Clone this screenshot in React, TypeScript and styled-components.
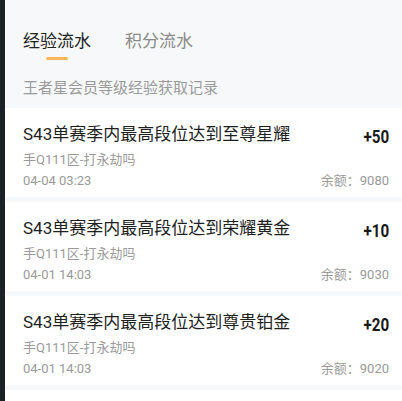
import React from 'react';
import styled, { createGlobalStyle } from 'styled-components';

const GlobalStyle = createGlobalStyle`
    html, body {
        margin: 0;
        padding: 0;
        background: #f7f8fa;
    }
    body {
        font-family: Roboto, "Noto Sans CJK SC", sans-serif;
    }
`;

const Page = styled('div')`
    display: flex;
    width: 402px;
    height: 401px;
    overflow: hidden;
`;

const SideStrip = styled('div')`
    width: 5px;
    flex-shrink: 0;
    background: #1d2127;
`;

const Main = styled('div')`
    flex: 1;
    background: #f7f8fa;
`;

const TabBar = styled('div')`
    display: flex;
    gap: 34px;
    padding: 29px 18px 0;
`;

const Tab = styled('div')`
    display: flex;
    flex-direction: column;
    align-items: center;
`;

const TabLabel = styled('span')<{ $active?: boolean }>`
    font-size: 17px;
    line-height: 24px;
    color: ${(p) => (p.$active ? '#222222' : '#8a8a8a')};
`;

const TabLine = styled('i')<{ $active?: boolean }>`
    display: block;
    width: 22px;
    height: 3px;
    margin-top: 4px;
    border-radius: 2px;
    background: ${(p) => (p.$active ? '#f9b65b' : 'transparent')};
`;

const Caption = styled('p')`
    margin: 18px 0 9px;
    padding: 0 18px;
    font-size: 15px;
    line-height: 21px;
    color: #9a9a9a;
`;

const List = styled('div')`
    display: flex;
    flex-direction: column;
    gap: 5px;
`;

const Card = styled('div')`
    box-sizing: border-box;
    height: 89px;
    padding: 14px 13px 0 18px;
    background: #ffffff;
`;

const Row = styled('div')`
    display: flex;
    justify-content: space-between;
    align-items: flex-start;
`;

const Title = styled('span')`
    font-size: 17px;
    line-height: 24px;
    color: #1f1f1f;
`;

// narrow bold figures, squeezed since no condensed face is installed
const Amount = styled('span')`
    display: inline-block;
    margin-top: 3px;
    font-family: Roboto, sans-serif;
    font-weight: 700;
    font-size: 19px;
    line-height: 24px;
    color: #1a1a1a;
    transform: scaleX(0.8);
    transform-origin: right center;
`;

const Meta = styled('div')`
    font-size: 13px;
    line-height: 21px;
    color: #9a9a9a;
`;

const records = [
    { title: 'S43单赛季内最高段位达到至尊星耀', amount: '+50', time: '04-04 03:23', balance: '9080' },
    { title: 'S43单赛季内最高段位达到荣耀黄金', amount: '+10', time: '04-01 14:03', balance: '9030' },
    { title: 'S43单赛季内最高段位达到尊贵铂金', amount: '+20', time: '04-01 14:03', balance: '9020' },
];

const App = () => {
    return (
        <>
            <GlobalStyle />
            <Page>
                <SideStrip />
                <Main>
                    <TabBar>
                        <Tab>
                            <TabLabel $active>经验流水</TabLabel>
                            <TabLine $active />
                        </Tab>
                        <Tab>
                            <TabLabel>积分流水</TabLabel>
                            <TabLine />
                        </Tab>
                    </TabBar>
                    <Caption>王者星会员等级经验获取记录</Caption>
                    <List>
                        {records.map((r, i) => (
                            <Card key={i}>
                                <Row>
                                    <Title>{r.title}</Title>
                                    <Amount>{r.amount}</Amount>
                                </Row>
                                <Meta>手Q111区-打永劫吗</Meta>
                                <Row>
                                    <Meta>{r.time}</Meta>
                                    <Meta>余额：{r.balance}</Meta>
                                </Row>
                            </Card>
                        ))}
                        <Card />
                    </List>
                </Main>
            </Page>
        </>
    );
};

export default App;
